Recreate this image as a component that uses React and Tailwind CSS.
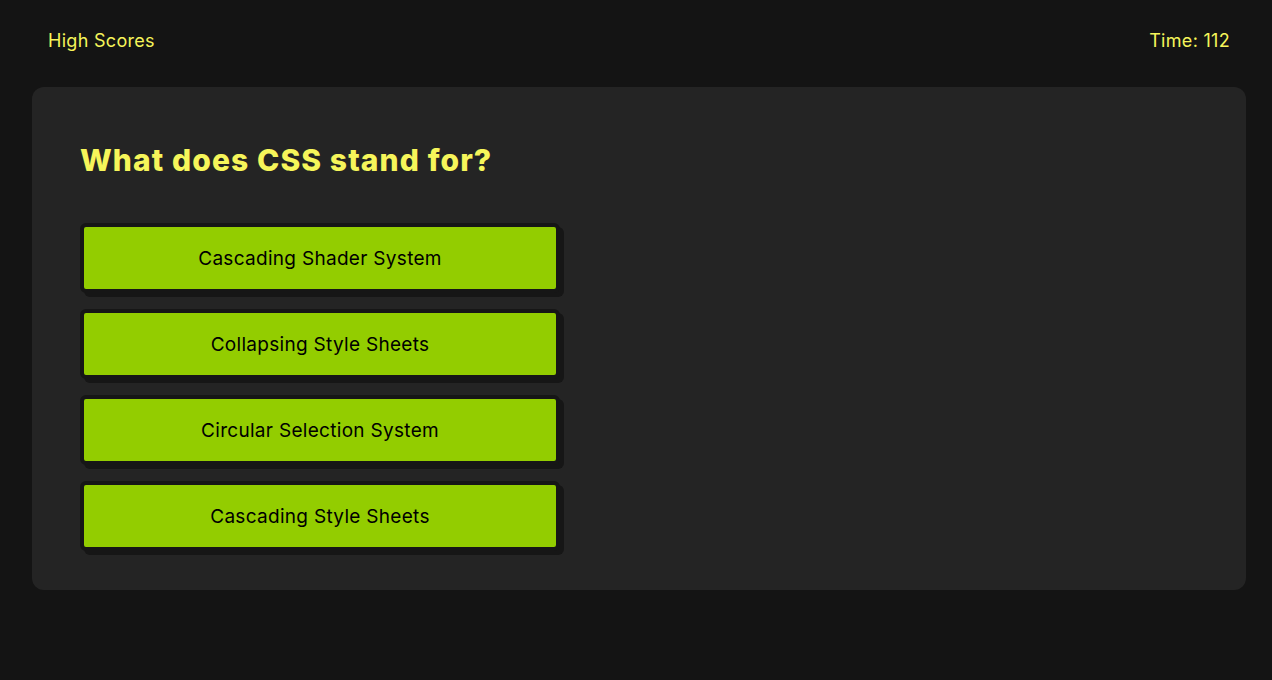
import React from 'react';

const answers = [
  'Cascading Shader System',
  'Collapsing Style Sheets',
  'Circular Selection System',
  'Cascading Style Sheets',
];

export default function App() {
  return (
    <div
      className="min-h-[680px] bg-[#141414] text-[#f6f55a]"
      style={{ fontFamily: 'Inter, "Noto Sans", sans-serif' }}
    >
      {/* Header */}
      <header className="h-[80px] flex items-center justify-between pl-12 pr-[42px] text-[18px] tracking-[0.3px]">
        <span>High Scores</span>
        <span>Time: 112</span>
      </header>

      {/* Question card */}
      <main className="ml-8 mr-[26px] mt-[7px] h-[503px] rounded-xl bg-[#242424] px-12 pt-[52px]">
        <h2 className="text-[30px] font-extrabold leading-[42px] tracking-[1.1px] mb-[42px]">
          What does CSS stand for?
        </h2>
        <div className="flex flex-col gap-4">
          {answers.map((a) => (
            <button
              key={a}
              className="w-[480px] h-[70px] pt-[2px] rounded-[6px] border-4 border-[#161616] bg-[#93cd00] text-black text-[19px] tracking-[0.3px] shadow-[4px_4px_0_#161616]"
            >
              {a}
            </button>
          ))}
        </div>
      </main>
    </div>
  );
}
